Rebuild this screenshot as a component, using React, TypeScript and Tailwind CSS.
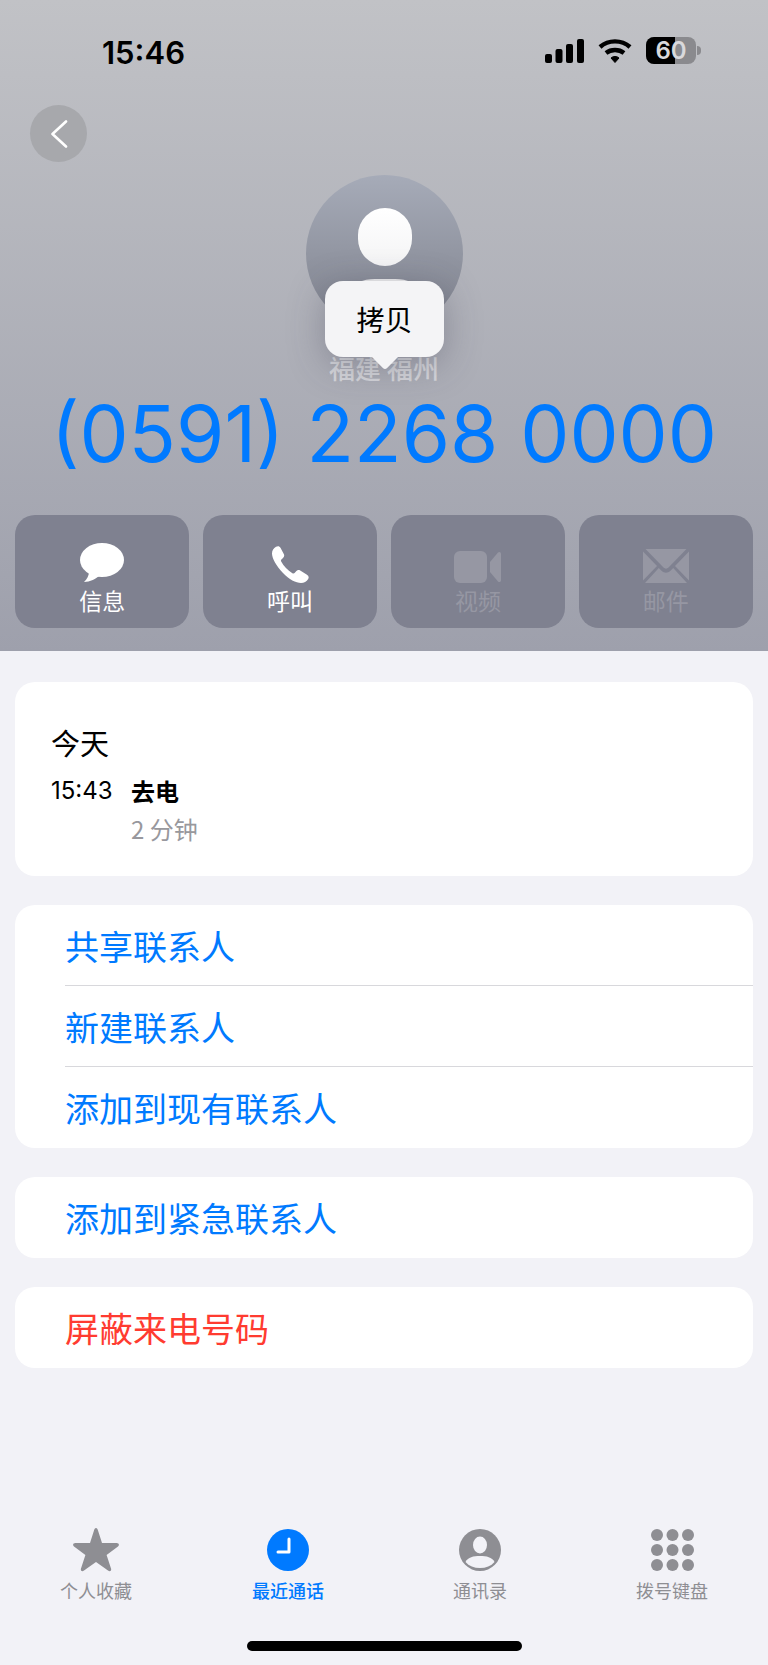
import React from 'react'

const CJK = '"Noto Sans CJK SC", sans-serif'

const Message = () => (
  <svg width="46" height="40" viewBox="0 0 46 40" fill="#fff">
    <ellipse cx="23" cy="17" rx="22" ry="17" />
    <path d="M10 28 C10 33 8 36 5 39 C11 39 17 36 21 32 Z" />
  </svg>
)

const Phone = () => (
  <svg width="38" height="37" viewBox="0 0 38 37" fill="#fff">
    <path d="M5 .8 C7 -.4 8.6 .2 9.6 2 L12.8 8 C13.6 9.6 13.2 11 12 12 L10.4 13.4 C9.8 14 9.8 14.8 10.2 15.6 C12.8 20.4 16.6 24.4 21.4 27.2 C22.2 27.6 23 27.6 23.6 27 L25.4 25 C26.4 23.8 27.8 23.6 29.2 24.4 L35.6 28.4 C37.6 29.6 38.2 31.2 37.2 33 C35.6 35.6 33 37 30 37 C25 37 18 33.4 12 27 C5 19.6 1 12 1 7.4 C1 4.6 2.6 2.2 5 .8 Z" />
  </svg>
)

const Video = () => (
  <svg width="47" height="32" viewBox="0 0 47 32" fill="#9697a3">
    <rect x="0" y="0" width="33" height="32" rx="6" />
    <path d="M36 11 L44 1.5 C45.2 .4 47 1 47 3 V29 C47 31 45.2 31.6 44 30.5 L36 21 Z" />
  </svg>
)

const Mail = () => (
  <svg width="46" height="34" viewBox="0 0 46 34" fill="#9697a3">
    <path d="M2.5 0 H43.5 L25.5 18.5 C24 20 22 20 20.5 18.5 Z" />
    <path d="M0 2.5 L14 17 L0 31.5 Z" />
    <path d="M46 2.5 L32 17 L46 31.5 Z" />
    <path d="M15.8 19 L18.8 22 C21.2 24.2 24.8 24.2 27.2 22 L30.2 19 L44 34 H2 Z" />
  </svg>
)

const Star = () => (
  <svg width="46" height="44" viewBox="0 0 46 44" fill="#8e8e93">
    <path d="M23 0 C24 0 24.6 1 25 2.5 L29 15 H43.5 C46 15 46.6 17 45 18.5 L33.6 27 L38 40.5 C38.8 43 36.8 44 35 42.6 L23 34 L11 42.6 C9.2 44 7.2 43 8 40.5 L12.4 27 L1 18.5 C-.6 17 0 15 2.5 15 H17 L21 2.5 C21.4 1 22 0 23 0 Z" />
  </svg>
)

const Clock = () => (
  <svg width="42" height="42" viewBox="0 0 42 42">
    <circle cx="21" cy="21" r="21" fill="#007aff" />
    <path d="M22 10 V23 H11" fill="none" stroke="#fff" strokeWidth="3" strokeLinecap="round" strokeLinejoin="round" />
  </svg>
)

const Person = () => (
  <svg width="42" height="42" viewBox="0 0 42 42">
    <circle cx="21" cy="21" r="21" fill="#8e8e93" />
    <ellipse cx="21" cy="16" rx="7" ry="8.5" fill="#f2f2f7" />
    <path d="M6.5 33 C9 28 14.5 27 21 27 C27.5 27 33 28 35.5 33 C32 37 27 39 21 39 C15 39 10 37 6.5 33 Z" fill="#f2f2f7" />
  </svg>
)

const Keypad = () => (
  <svg width="43" height="42" viewBox="0 0 43 42" fill="#8e8e93">
    <circle cx="6" cy="6" r="6" />
    <circle cx="21.5" cy="6" r="6" />
    <circle cx="37" cy="6" r="6" />
    <circle cx="6" cy="21" r="6" />
    <circle cx="21.5" cy="21" r="6" />
    <circle cx="37" cy="21" r="6" />
    <circle cx="6" cy="36" r="6" />
    <circle cx="21.5" cy="36" r="6" />
    <circle cx="37" cy="36" r="6" />
  </svg>
)

const actions = [
  { label: '信息', icon: <Message />, on: true },
  { label: '呼叫', icon: <Phone />, on: true },
  { label: '视频', icon: <Video />, on: false },
  { label: '邮件', icon: <Mail />, on: false },
]

const tabs = [
  { label: '个人收藏', icon: <Star />, active: false },
  { label: '最近通话', icon: <Clock />, active: true },
  { label: '通讯录', icon: <Person />, active: false },
  { label: '拨号键盘', icon: <Keypad />, active: false },
]

const Row = ({ text, red, line }: { text: string; red?: boolean; line?: boolean }) => (
  <div className={`flex h-[81px] items-center pl-[50px] ${red ? 'text-[#ff3b30]' : 'text-[#007aff]'}`}>
    <div className={`flex h-full flex-1 items-center text-[34px] ${line ? 'border-b border-[#d8d8dc]' : ''}`}>{text}</div>
  </div>
)

export default function App() {
  return (
    <div className="relative flex h-[1665px] w-[768px] flex-col overflow-hidden bg-[#f2f2f7]" style={{ fontFamily: CJK }}>
      <header className="relative h-[651px] bg-gradient-to-b from-[#c1c2c6] to-[#9ea0ac]">
        <div className="flex h-[105px] items-start justify-between pl-[102px] pr-[67px] pt-[36px]">
          <span className="text-[31px] font-semibold leading-[34px] text-black" style={{ fontFamily: 'Inter, sans-serif' }}>15:46</span>
          <div className="flex items-center gap-[14px] pt-[1px]">
            <svg width="39" height="24" viewBox="0 0 39 24" fill="#000">
              <rect x="0" y="15" width="7" height="9" rx="2" />
              <rect x="10.5" y="10" width="7" height="14" rx="2" />
              <rect x="21" y="5" width="7" height="19" rx="2" />
              <rect x="32" y="0" width="7" height="24" rx="2" />
            </svg>
            <svg width="34" height="24" viewBox="0 0 34 24" fill="none" stroke="#000" strokeWidth="4.4">
              <path d="M2 8 C10.5 0.5 23.5 0.5 32 8" />
              <path d="M8 14 C13 10 21 10 26 14" />
              <path d="M13 19 L17 23.5 L21 19 C19 17 15 17 13 19 Z" fill="#000" strokeWidth="1" />
            </svg>
            <div className="flex items-center gap-[1px]">
              <div className="relative flex h-[27px] w-[50px] items-center justify-center overflow-hidden rounded-[8px] bg-[#8a8a8e]">
                <div className="absolute inset-y-0 left-0 w-[29px] bg-black" />
                <span className="relative text-[24px] font-semibold leading-none text-[#d9d9dc]" style={{ fontFamily: 'Inter, sans-serif' }}>60</span>
              </div>
              <div className="h-[9px] w-[4px] rounded-r-full bg-[#8a8a8e]" />
            </div>
          </div>
        </div>

        <div className="pl-[30px]">
          <button className="flex h-[57px] w-[57px] items-center justify-center rounded-full bg-[#a7a8ac]">
            <svg width="18" height="28" viewBox="0 0 18 28" fill="none" stroke="#fff" strokeWidth="2.6" strokeLinecap="round" strokeLinejoin="round">
              <path d="M16 1.5 L2.5 14 L16 26.5" />
            </svg>
          </button>
        </div>

        <div className="mt-[13px] flex flex-col items-center">
          <div className="relative h-[157px] w-[157px] overflow-hidden rounded-full bg-gradient-to-b from-[#a6abb8] to-[#7f828d]">
            <div className="absolute left-[52px] top-[33px] h-[58px] w-[54px] rounded-full bg-gradient-to-b from-white to-[#f4f4f5]" />
            <div className="absolute left-[24px] top-[104px] h-[90px] w-[110px] rounded-full bg-[#eeeeef]" />
          </div>
          <div className="mt-[22px] text-[26px] font-medium leading-[36px] text-white/50" style={{ marginTop: '18px' }}>福建 福州</div>
          <div className="mt-[2px] text-[78px] leading-[92px] text-[#007aff]" style={{ fontFamily: 'Inter, sans-serif' }}>(0591) 2268 0000</div>
        </div>

        {/* copy bubble sits over the avatar */}
        <div className="absolute left-[325px] top-[281px] flex h-[76px] w-[119px] items-center justify-center rounded-[18px] bg-[#f4f4f6] shadow-[0_8px_36px_rgba(60,60,80,0.35)]">
          <span className="text-[28px] leading-none text-black">拷贝</span>
          <div className="absolute -bottom-[9px] left-[50px] h-[20px] w-[20px] rotate-45 rounded-[3px] bg-[#f4f4f6]" />
        </div>

        <div className="mt-[35px] grid grid-cols-4 gap-[13.5px] px-[15px]">
          {actions.map((a) => (
            <div key={a.label} className="flex h-[113px] flex-col items-center rounded-[20px] bg-[#7f8190]">
              <div className="flex h-[68px] items-end justify-center pb-[0px]">{a.icon}</div>
              <div className={`mt-[1px] text-[23px] leading-[32px] ${a.on ? 'text-white' : 'text-[#9697a3]'}`}>{a.label}</div>
            </div>
          ))}
        </div>
      </header>

      <main className="flex flex-col gap-[29px] px-[15px] pt-[31px]">
        <section className="h-[194px] rounded-[20px] bg-white pl-[36px] pt-[40px]">
          <div className="text-[29px] leading-[40px] text-black">今天</div>
          <div className="mt-[13px] flex">
            <div className="w-[80px] text-[24px] leading-[32px] text-black" style={{ fontFamily: 'Inter, sans-serif' }}>15:43</div>
            <div>
              <div className="text-[24px] font-bold leading-[32px] text-black">去电</div>
              <div className="mt-[5px] text-[24px] leading-[34px] text-[#98989d]">2 分钟</div>
            </div>
          </div>
        </section>

        <section className="overflow-hidden rounded-[20px] bg-white">
          <Row text="共享联系人" line />
          <Row text="新建联系人" line />
          <Row text="添加到现有联系人" />
        </section>

        <section className="overflow-hidden rounded-[20px] bg-white">
          <Row text="添加到紧急联系人" />
        </section>

        <section className="overflow-hidden rounded-[20px] bg-white">
          <Row text="屏蔽来电号码" red />
        </section>
      </main>

      <nav className="absolute inset-x-0 top-[1527px] grid grid-cols-4">
        {tabs.map((t) => (
          <div key={t.label} className="flex flex-col items-center">
            <div className="flex h-[45px] items-center justify-center">{t.icon}</div>
            <div className={`mt-[5px] text-[18px] leading-[26px] ${t.active ? 'font-medium text-[#007aff]' : 'text-[#8e8e93]'}`}>{t.label}</div>
          </div>
        ))}
      </nav>

      <div className="absolute left-[247px] top-[1641px] h-[10px] w-[275px] rounded-full bg-black" />
    </div>
  )
}
